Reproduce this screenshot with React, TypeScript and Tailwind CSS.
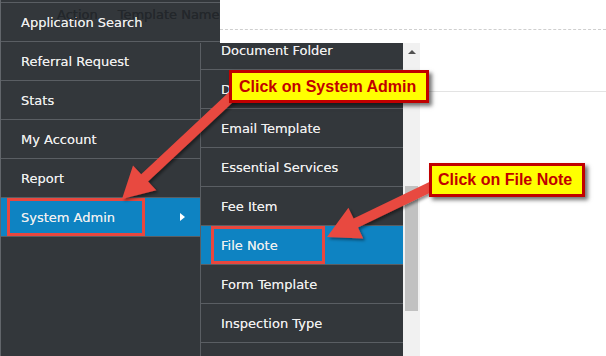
import React from 'react';

const mainItems = ['Application Search', 'Referral Request', 'Stats', 'My Account', 'Report'];
const subItems = [
  'Document Folder',
  'Document Type',
  'Email Template',
  'Essential Services',
  'Fee Item',
  'File Note',
  'Form Template',
  'Inspection Type',
  'Letter Template',
];

type Pt = [number, number];

// polygon for a thick arrow from tail to tip
function arrowPoints(tail: Pt, tip: Pt, shaft: number, headLen: number, headHalf: number) {
  const dx = tip[0] - tail[0];
  const dy = tip[1] - tail[1];
  const len = Math.hypot(dx, dy);
  const ux = dx / len;
  const uy = dy / len;
  const nx = -uy;
  const ny = ux;
  const bx = tip[0] - ux * headLen;
  const by = tip[1] - uy * headLen;
  const s = shaft / 2;
  const pts: Pt[] = [
    [tail[0] + nx * s, tail[1] + ny * s],
    [bx + nx * s, by + ny * s],
    [bx + nx * headHalf, by + ny * headHalf],
    tip,
    [bx - nx * headHalf, by - ny * headHalf],
    [bx - nx * s, by - ny * s],
    [tail[0] - nx * s, tail[1] - ny * s],
  ];
  return pts.map((p) => `${p[0].toFixed(1)},${p[1].toFixed(1)}`).join(' ');
}

function Callout({ text, className }: { text: string; className: string }) {
  return (
    <div
      className={`absolute flex items-center bg-[#ffff00] border-[3px] border-[#c00000] shadow-[3px_3px_4px_rgba(0,0,0,0.55)] font-['Liberation_Sans',Arial,sans-serif] font-bold text-[16px] leading-none text-[#c00000] whitespace-nowrap ${className}`}
    >
      {text}
    </div>
  );
}

const itemText = 'text-[#efefef] [text-shadow:0_0_0.5px_rgba(255,255,255,0.7)]';

export default function App() {
  return (
    <div className="relative w-[606px] h-[356px] overflow-hidden bg-white flex font-['DejaVu_Sans',Verdana,sans-serif] text-[13px] leading-[16px]">
      {/* main side menu */}
      <aside className="relative w-[220px] shrink-0 h-full bg-[#33373b] border-l border-[#62666b] pt-[2px] overflow-hidden">
        <div className="border-t border-[#5a5e63]">
          {mainItems.map((item) => (
            <div
              key={item}
              className={`h-[39px] flex items-center pl-[20px] pt-[1px] border-b border-[#5a5e63] ${itemText}`}
            >
              {item}
            </div>
          ))}
          <div className="h-[39px] flex items-center px-[6px] bg-[#0e83c2] border-b border-[#5a5e63] text-white">
            <div className={`w-[138px] h-full flex items-center pl-[11px] pt-[1px] border-[3px] border-[#e8473e] ${itemText}`}>
              System Admin
            </div>
            <span className="ml-[35px] w-0 h-0 border-y-[4px] border-y-transparent border-l-[5px] border-l-white" />
          </div>
        </div>
        {/* table header showing through */}
        <div className="absolute left-[56px] top-[7px] flex gap-[20px] text-[#23272b] whitespace-nowrap [text-shadow:0_0_0.5px_#23272b]">
          <span>Action</span>
          <span>Template Name</span>
        </div>
      </aside>

      {/* page content */}
      <main className="flex-1">
        <div className="h-[30px] border-b border-dashed border-[#cfcfcf]" />
        <div className="h-[62px] border-b border-[#e3e3e3]" />
      </main>

      {/* sub menu flyout */}
      <div className="absolute left-[200px] top-[43px] bottom-0 flex">
        <div className="w-[203px] h-full bg-[#33373b] border-l border-[#5a5e63] overflow-hidden">
          <div className="-mt-[12px]">
            {subItems.map((item) =>
              item === 'File Note' ? (
                <div key={item} className="h-[39px] bg-[#0e83c2] border-b border-[#5a5e63] pl-[10px]">
                  <div className={`w-[114px] h-[38px] flex items-center pl-[7px] pt-[1px] border-[3px] border-[#e8473e] ${itemText}`}>
                    {item}
                  </div>
                </div>
              ) : (
                <div
                  key={item}
                  className={`h-[39px] flex items-center pl-[20px] pt-[1px] border-b border-[#5a5e63] ${itemText}`}
                >
                  {item}
                </div>
              ),
            )}
          </div>
        </div>
        <div className="w-[17px] h-full bg-[#f1f1f1] flex flex-col items-center">
          <div className="h-[17px] flex items-center justify-center">
            <span className="w-0 h-0 border-x-[4px] border-x-transparent border-b-[4px] border-b-[#505050]" />
          </div>
          <div className="mt-[126px] w-[13px] h-[125px] bg-[#c1c1c1]" />
        </div>
      </div>

      {/* annotation arrows */}
      <svg className="absolute inset-0 pointer-events-none" width="606" height="356">
        <defs>
          <filter id="sh" x="-20%" y="-20%" width="140%" height="140%">
            <feDropShadow dx="2" dy="2" stdDeviation="1.5" floodColor="#000" floodOpacity="0.45" />
          </filter>
        </defs>
        <polygon points={arrowPoints([245, 84], [122, 199], 10, 31, 17)} fill="#e8483f" filter="url(#sh)" />
        <polygon points={arrowPoints([445, 180], [327, 237], 10, 32, 17)} fill="#e8483f" filter="url(#sh)" />
      </svg>

      <Callout text="Click on System Admin" className="left-[229px] top-[70px] w-[200px] h-[33px] pl-[7px]" />
      <Callout text="Click on File Note" className="left-[429px] top-[163px] w-[156px] h-[34px] pl-[6px]" />
    </div>
  );
}
